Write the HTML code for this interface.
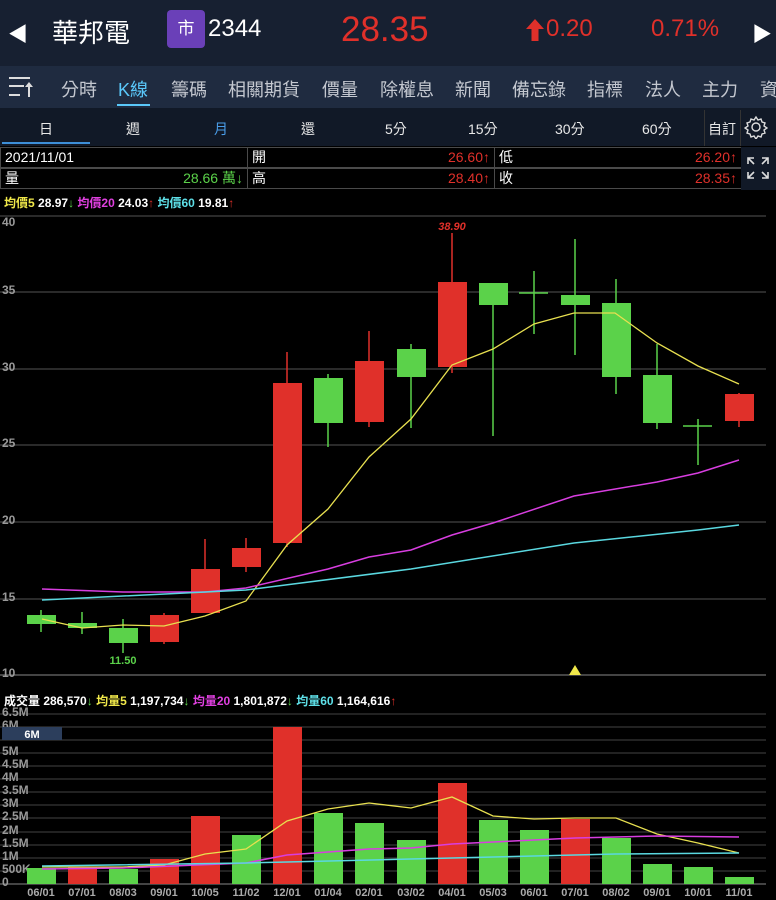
<!DOCTYPE html>
<html><head><meta charset="utf-8"><style>
*{margin:0;padding:0;box-sizing:border-box}
body{width:776px;height:900px;background:#000;overflow:hidden;position:relative;font-family:"Liberation Sans","Noto Sans CJK TC",sans-serif;color:#fff}
.a{position:absolute;white-space:nowrap}
#top{position:absolute;left:0;top:0;width:776px;height:66px;background:#172031}
#tabs{position:absolute;left:0;top:66px;width:776px;height:42px;background:#1f2b40}
#per{position:absolute;left:0;top:108px;width:776px;height:38px;background:#111927}
.t{font-size:18px;color:#c4c8d0;top:76px}
.p{font-size:14px;color:#e8e8e8;top:119px}
.cell{position:absolute;height:21px;border:1px solid #4a4a4a;background:#000;font-size:14px;line-height:19px;padding:0 4px}
.r{color:#e0302a;float:right}
</style></head><body>
<div id="top"></div>
<div class="a" style="left:8px;top:18px;font-size:20px">◀</div>
<div class="a" style="left:52px;top:13px;font-size:26px">華邦電</div>
<div class="a" style="left:167px;top:10px;width:38px;height:38px;background:#6a40b8;border-radius:4px;font-size:17px;text-align:center;line-height:38px">市</div>
<div class="a" style="left:208px;top:15px;font-size:24px">2344</div>
<div class="a" style="left:341px;top:10px;font-size:35px;color:#e0302a">28.35</div>
<svg class="a" style="left:526px;top:19px" width="18" height="22"><path d="M9 0 L18 10 H12.5 V22 H5.5 V10 H0Z" fill="#e0302a"/></svg>
<div class="a" style="left:546px;top:15px;font-size:24px;color:#e0302a">0.20</div>
<div class="a" style="left:651px;top:15px;font-size:24px;color:#e0302a">0.71%</div>
<div class="a" style="left:752px;top:18px;font-size:20px">▶</div>

<div id="tabs"></div>
<svg class="a" style="left:8px;top:76px" width="26" height="22"><g stroke="#ddd" stroke-width="2"><line x1="1" y1="2" x2="22" y2="2"/><line x1="1" y1="10" x2="16" y2="10"/><line x1="1" y1="19" x2="12" y2="19"/><line x1="21" y1="8" x2="21" y2="21"/></g><path d="M17 11 L21 6 L25 11Z" fill="#ddd"/></svg>
<div class="a t" style="left:61px">分時</div>
<div class="a t" style="left:118px;color:#5ac8fa">K線</div>
<div class="a" style="left:117px;top:104px;width:33px;height:2px;background:#5ac8fa"></div>
<div class="a t" style="left:171px">籌碼</div>
<div class="a t" style="left:228px">相關期貨</div>
<div class="a t" style="left:322px">價量</div>
<div class="a t" style="left:380px">除權息</div>
<div class="a t" style="left:455px">新聞</div>
<div class="a t" style="left:512px">備忘錄</div>
<div class="a t" style="left:587px">指標</div>
<div class="a t" style="left:645px">法人</div>
<div class="a t" style="left:702px">主力</div>
<div class="a t" style="left:760px">資</div>

<div id="per"></div>
<div class="a p" style="left:39px">日</div>
<div class="a p" style="left:126px">週</div>
<div class="a p" style="left:214px;color:#4a9eea">月</div>
<div class="a p" style="left:301px">還</div>
<div class="a p" style="left:385px">5分</div>
<div class="a p" style="left:468px">15分</div>
<div class="a p" style="left:555px">30分</div>
<div class="a p" style="left:642px">60分</div>
<div class="a" style="left:2px;top:142px;width:88px;height:2px;background:#3d8fd8"></div>
<div class="a" style="left:704px;top:110px;width:1px;height:36px;background:#333"></div>
<div class="a p" style="left:708px">自訂</div>
<div class="a" style="left:740px;top:110px;width:1px;height:36px;background:#333"></div>
<svg class="a" style="left:744px;top:115px" width="24" height="24" viewBox="0 0 24 24"><path d="M12 2l2 3 3-1 1 3 3 1-1 3 3 2-3 2 1 3-3 1-1 3-3-1-2 3-2-3-3 1-1-3-3-1 1-3-3-2 3-2-1-3 3-1 1-3 3 1z" fill="none" stroke="#ddd" stroke-width="1.4"/><circle cx="12" cy="12" r="4" fill="none" stroke="#ddd" stroke-width="1.4"/></svg>

<div class="cell" style="left:0;top:147px;width:248px">2021/11/01</div>
<div class="cell" style="left:247px;top:147px;width:248px">開<span class="r">26.60↑</span></div>
<div class="cell" style="left:494px;top:147px;width:248px">低<span class="r">26.20↑</span></div>
<div class="cell" style="left:0;top:168px;width:248px">量<span class="r" style="color:#5bd24a">28.66 萬↓</span></div>
<div class="cell" style="left:247px;top:168px;width:248px">高<span class="r">28.40↑</span></div>
<div class="cell" style="left:494px;top:168px;width:248px">收<span class="r">28.35↑</span></div>
<div class="a" style="left:741px;top:147px;width:35px;height:43px;background:#111927"></div>
<svg class="a" style="left:746px;top:156px" width="24" height="24" stroke="#ddd" stroke-width="1.6" fill="none"><path d="M2 8V2h6M2 2l6 6M22 8V2h-6M22 2l-6 6M2 16v6h6M2 22l6-6M22 16v6h-6M22 22l-6-6"/></svg>

<div class="a" style="left:4px;top:194px;font-size:12px;font-weight:bold"><span style="color:#f0e84a">均價5</span> 28.97<span style="color:#5bd24a">↓</span> <span style="color:#e040e0">均價20</span> 24.03<span style="color:#e0302a">↑</span> <span style="color:#5ee0e8">均價60</span> 19.81<span style="color:#e0302a">↑</span></div>
<div class="a" style="left:4px;top:692px;font-size:12px;font-weight:bold">成交量 286,570<span style="color:#5bd24a">↓</span> <span style="color:#f0e84a">均量5</span> 1,197,734<span style="color:#5bd24a">↓</span> <span style="color:#e040e0">均量20</span> 1,801,872<span style="color:#5bd24a">↓</span> <span style="color:#5ee0e8">均量60</span> 1,164,616<span style="color:#e0302a">↑</span></div>

<svg class="a" style="left:0;top:0" width="776" height="900" font-family="Liberation Sans,sans-serif">
<g stroke="#555" stroke-width="1">
<line x1="0" y1="216" x2="766" y2="216"/><line x1="0" y1="292" x2="766" y2="292"/><line x1="0" y1="369" x2="766" y2="369"/><line x1="0" y1="445" x2="766" y2="445"/><line x1="0" y1="522" x2="766" y2="522"/><line x1="0" y1="599" x2="766" y2="599"/><line x1="0" y1="675" x2="766" y2="675" stroke="#888"/>
</g>
<g fill="#999" font-size="12" font-weight="bold"><text x="2" y="226">40</text><text x="2" y="294">35</text><text x="2" y="371">30</text><text x="2" y="447">25</text><text x="2" y="524">20</text><text x="2" y="601">15</text><text x="2" y="677">10</text></g>
<g stroke="#5bd24a" stroke-width="1.5">
<line x1="41" y1="610" x2="41" y2="632"/><line x1="82" y1="612" x2="82" y2="634"/><line x1="123" y1="619" x2="123" y2="653"/><line x1="328" y1="374" x2="328" y2="447"/><line x1="411" y1="344" x2="411" y2="428"/><line x1="493" y1="283" x2="493" y2="436"/><line x1="534" y1="271" x2="534" y2="334"/><line x1="575" y1="239" x2="575" y2="355"/><line x1="616" y1="279" x2="616" y2="394"/><line x1="657" y1="344" x2="657" y2="429"/><line x1="698" y1="419" x2="698" y2="465"/>
<line x1="519" y1="293" x2="548" y2="293"/><line x1="683" y1="426" x2="712" y2="426"/>
</g>
<g fill="#5bd24a">
<rect x="27" y="615" width="29" height="9"/><rect x="68" y="623" width="29" height="5"/><rect x="109" y="628" width="29" height="15"/><rect x="314" y="378" width="29" height="45"/><rect x="397" y="349" width="29" height="28"/><rect x="479" y="283" width="29" height="22"/><rect x="561" y="295" width="29" height="10"/><rect x="602" y="303" width="29" height="74"/><rect x="643" y="375" width="29" height="48"/>
</g>
<g stroke="#e0302a" stroke-width="1.5">
<line x1="164" y1="613" x2="164" y2="644"/><line x1="205" y1="539" x2="205" y2="613"/><line x1="246" y1="538" x2="246" y2="572"/><line x1="287" y1="352" x2="287" y2="547"/><line x1="369" y1="331" x2="369" y2="427"/><line x1="452" y1="233" x2="452" y2="373"/><line x1="739" y1="393" x2="739" y2="427"/>
</g>
<g fill="#e0302a">
<rect x="150" y="615" width="29" height="27"/><rect x="191" y="569" width="29" height="44"/><rect x="232" y="548" width="29" height="19"/><rect x="273" y="383" width="29" height="160"/><rect x="355" y="361" width="29" height="61"/><rect x="438" y="282" width="29" height="85"/><rect x="725" y="394" width="29" height="27"/>
</g>
<text x="452" y="230" fill="#e0302a" font-size="11" font-weight="bold" font-style="italic" text-anchor="middle">38.90</text>
<text x="123" y="664" fill="#5bd24a" font-size="11" font-weight="bold" text-anchor="middle">11.50</text>
<path d="M569 675 L575 665 L581 675Z" fill="#f0e84a"/>
<polyline fill="none" stroke="#e8e050" stroke-width="1.3" points="42,619 82,628 123,625 164,626 205,616 246,601 287,545 328,509 369,457 411,419 452,365 493,349 534,324 574,313 615,313 657,343 698,366 739,384"/>
<polyline fill="none" stroke="#d83ee0" stroke-width="1.5" points="42,589 123,592 205,592 246,588 328,569 369,557 411,550 452,535 493,523 574,496 657,482 698,473 739,460"/>
<polyline fill="none" stroke="#5ad8e0" stroke-width="1.5" points="42,600 246,590 411,569 574,543 698,530 739,525"/>

<g stroke="#444" stroke-width="1">
<line x1="0" y1="714" x2="766" y2="714"/><line x1="0" y1="727" x2="766" y2="727"/><line x1="0" y1="740" x2="766" y2="740"/><line x1="0" y1="753" x2="766" y2="753"/><line x1="0" y1="766" x2="766" y2="766"/><line x1="0" y1="779" x2="766" y2="779"/><line x1="0" y1="792" x2="766" y2="792"/><line x1="0" y1="805" x2="766" y2="805"/><line x1="0" y1="818" x2="766" y2="818"/><line x1="0" y1="832" x2="766" y2="832"/><line x1="0" y1="845" x2="766" y2="845"/><line x1="0" y1="858" x2="766" y2="858"/><line x1="0" y1="871" x2="766" y2="871"/><line x1="0" y1="884" x2="766" y2="884" stroke="#888"/>
</g>
<g fill="#999" font-size="12" font-weight="bold"><text x="2" y="716">6.5M</text><text x="2" y="729">6M</text><text x="2" y="755">5M</text><text x="2" y="768">4.5M</text><text x="2" y="781">4M</text><text x="2" y="794">3.5M</text><text x="2" y="807">3M</text><text x="2" y="820">2.5M</text><text x="2" y="834">2M</text><text x="2" y="847">1.5M</text><text x="2" y="860">1M</text><text x="2" y="873">500K</text><text x="2" y="886">0</text></g>
<rect x="2" y="727" width="60" height="13" fill="#2c3e5c"/>
<text x="32" y="738" fill="#fff" font-size="11" font-weight="bold" text-anchor="middle">6M</text>
<g fill="#5bd24a">
<rect x="27" y="868" width="29" height="16"/><rect x="109" y="869" width="29" height="15"/><rect x="232" y="835" width="29" height="49"/><rect x="314" y="813" width="29" height="71"/><rect x="355" y="823" width="29" height="61"/><rect x="397" y="840" width="29" height="44"/><rect x="479" y="820" width="29" height="64"/><rect x="520" y="830" width="29" height="54"/><rect x="602" y="838" width="29" height="46"/><rect x="643" y="864" width="29" height="20"/><rect x="684" y="867" width="29" height="17"/><rect x="725" y="877" width="29" height="7"/>
</g>
<g fill="#e0302a">
<rect x="68" y="867" width="29" height="17"/><rect x="150" y="859" width="29" height="25"/><rect x="191" y="816" width="29" height="68"/><rect x="273" y="727" width="29" height="157"/><rect x="438" y="783" width="29" height="101"/><rect x="561" y="819" width="29" height="65"/>
</g>
<polyline fill="none" stroke="#e8e050" stroke-width="1.3" points="42,867 123,867 164,865 205,854 246,849 287,821 328,809 369,803 411,808 452,797 493,816 534,819 575,818 616,818 657,834 698,843 739,853"/>
<polyline fill="none" stroke="#d83ee0" stroke-width="1.5" points="42,869 123,868 246,863 287,855 328,852 369,849 411,848 452,844 493,842 534,840 575,838 616,837 657,836 739,837"/>
<polyline fill="none" stroke="#5ad8e0" stroke-width="1.5" points="42,866 246,863 287,862 411,859 534,856 616,854 739,853"/>
<g fill="#aaa" font-size="11" font-weight="bold" text-anchor="middle">
<text x="41" y="896">06/01</text><text x="82" y="896">07/01</text><text x="123" y="896">08/03</text><text x="164" y="896">09/01</text><text x="205" y="896">10/05</text><text x="246" y="896">11/02</text><text x="287" y="896">12/01</text><text x="328" y="896">01/04</text><text x="369" y="896">02/01</text><text x="411" y="896">03/02</text><text x="452" y="896">04/01</text><text x="493" y="896">05/03</text><text x="534" y="896">06/01</text><text x="575" y="896">07/01</text><text x="616" y="896">08/02</text><text x="657" y="896">09/01</text><text x="698" y="896">10/01</text><text x="739" y="896">11/01</text>
</g>
</svg>
</body></html>
